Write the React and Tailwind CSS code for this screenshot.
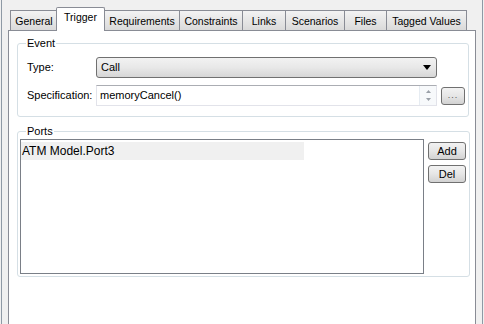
const tabs = [
  { label: 'General', w: 'w-[47px]' },
  { label: 'Trigger', w: 'w-[49px]', active: true },
  { label: 'Requirements', w: 'w-[75px]' },
  { label: 'Constraints', w: 'w-[63px]' },
  { label: 'Links', w: 'w-[43px]' },
  { label: 'Scenarios', w: 'w-[59px]' },
  { label: 'Files', w: 'w-[42px]' },
  { label: 'Tagged Values', w: 'w-[81px]', last: true },
];

const btn =
  'flex items-center justify-center rounded-[3px] border border-[#707070] bg-gradient-to-b from-[#f2f2f2] via-[#e6e6e6] to-[#d2d2d2] text-[11px] text-black';

const Tab = ({ label, w, active, last }) =>
  active ? (
    <div
      className={`${w} h-[24px] -mb-[1px] -mx-[1px] relative z-10 flex justify-center pt-[3px] border-x border-t border-[#898c95] bg-white rounded-t-[2px]`}
    >
      {label}
    </div>
  ) : (
    <div
      className={`${w} h-[20px] flex justify-center pt-[4px] border-l border-t ${last ? 'border-r' : ''} border-[#898c95] bg-gradient-to-b from-[#f3f3f3] to-[#dadada]`}
    >
      {label}
    </div>
  );

export default function App() {
  return (
    <div
      className="w-[484px] h-[324px] bg-[#f0f0f0] overflow-hidden pl-[1px] pr-[1px] text-[11px] text-black"
      style={{ fontFamily: '"Liberation Sans", Arial, sans-serif' }}
    >
      <div className="h-full w-[482px] border-x border-[#8e99a5] pl-[6px] pt-[7px]">
        {/* Tab strip */}
        <div className="flex items-end h-[23px] pl-[2px] leading-[13px] text-[10.5px]">
          {tabs.map(t => (
            <Tab key={t.label} {...t} />
          ))}
        </div>

        {/* Tab page */}
        <div className="w-[468px] h-[320px] bg-white border border-[#898c95] pl-[8px] pr-[6px] pt-[6px]">
          <fieldset className="border border-[#d5dfe5] rounded-[3px] pl-[9px] pr-[3px] pb-[10px]">
            <legend className="-ml-[1px] px-[1px] leading-[13px]">Event</legend>
            <div className="flex items-center pt-[7px]">
              <span className="w-[69px]">Type:</span>
              <div className="w-[341px] h-[21px] flex items-center justify-between rounded-[3px] border border-[#707070] bg-gradient-to-b from-[#f2f2f2] via-[#e8e8e8] to-[#d6d6d6] pl-[4px] pr-[5px]">
                <span>Call</span>
                <svg width="8" height="5" viewBox="0 0 8 5">
                  <path d="M0 0h8L4 5z" fill="#000" />
                </svg>
              </div>
            </div>
            <div className="flex items-center mt-[7px]">
              <span className="w-[69px]">Specification:</span>
              <div className="w-[341px] h-[21px] flex items-center border border-[#e2e3ea] border-t-[#abadb3] bg-white pl-[3px]">
                <span className="flex-1">memoryCancel()</span>
                <div className="w-[17px] h-full flex flex-col items-center justify-center gap-[5px] border-l border-[#e6ecf2] bg-[#f7f9fb]">
                  <svg width="5" height="3" viewBox="0 0 5 3">
                    <path d="M0 3h5L2.5 0z" fill="#9aa0a8" />
                  </svg>
                  <svg width="5" height="3" viewBox="0 0 5 3">
                    <path d="M0 0h5L2.5 3z" fill="#9aa0a8" />
                  </svg>
                </div>
              </div>
              <div className={`${btn} ml-[4px] w-[24px] h-[18px] items-end pb-[4px]`}>
                <span className="text-[9px] leading-none tracking-[1px] text-[#555]">...</span>
              </div>
            </div>
          </fieldset>

          <fieldset className="mt-[8px] border border-[#d5dfe5] rounded-[3px] pl-[2px] pr-[3px] pb-[2px]">
            <legend className="ml-[6px] px-[1px] leading-[13px]">Ports</legend>
            <div className="flex pt-[1px]">
              <div className="w-[404px] h-[135px] border border-[#7a7f87] pt-[2px]">
                <div className="w-[283px] h-[18px] flex items-center bg-[#f0f0f0] pl-[1px] text-[12px]">
                  ATM Model.Port3
                </div>
              </div>
              <div className="flex flex-col gap-[5px] ml-[4px] pt-[3px]">
                <div className={`${btn} w-[38px] h-[18px]`}>Add</div>
                <div className={`${btn} w-[38px] h-[18px]`}>Del</div>
              </div>
            </div>
          </fieldset>
        </div>
      </div>
    </div>
  );
}
